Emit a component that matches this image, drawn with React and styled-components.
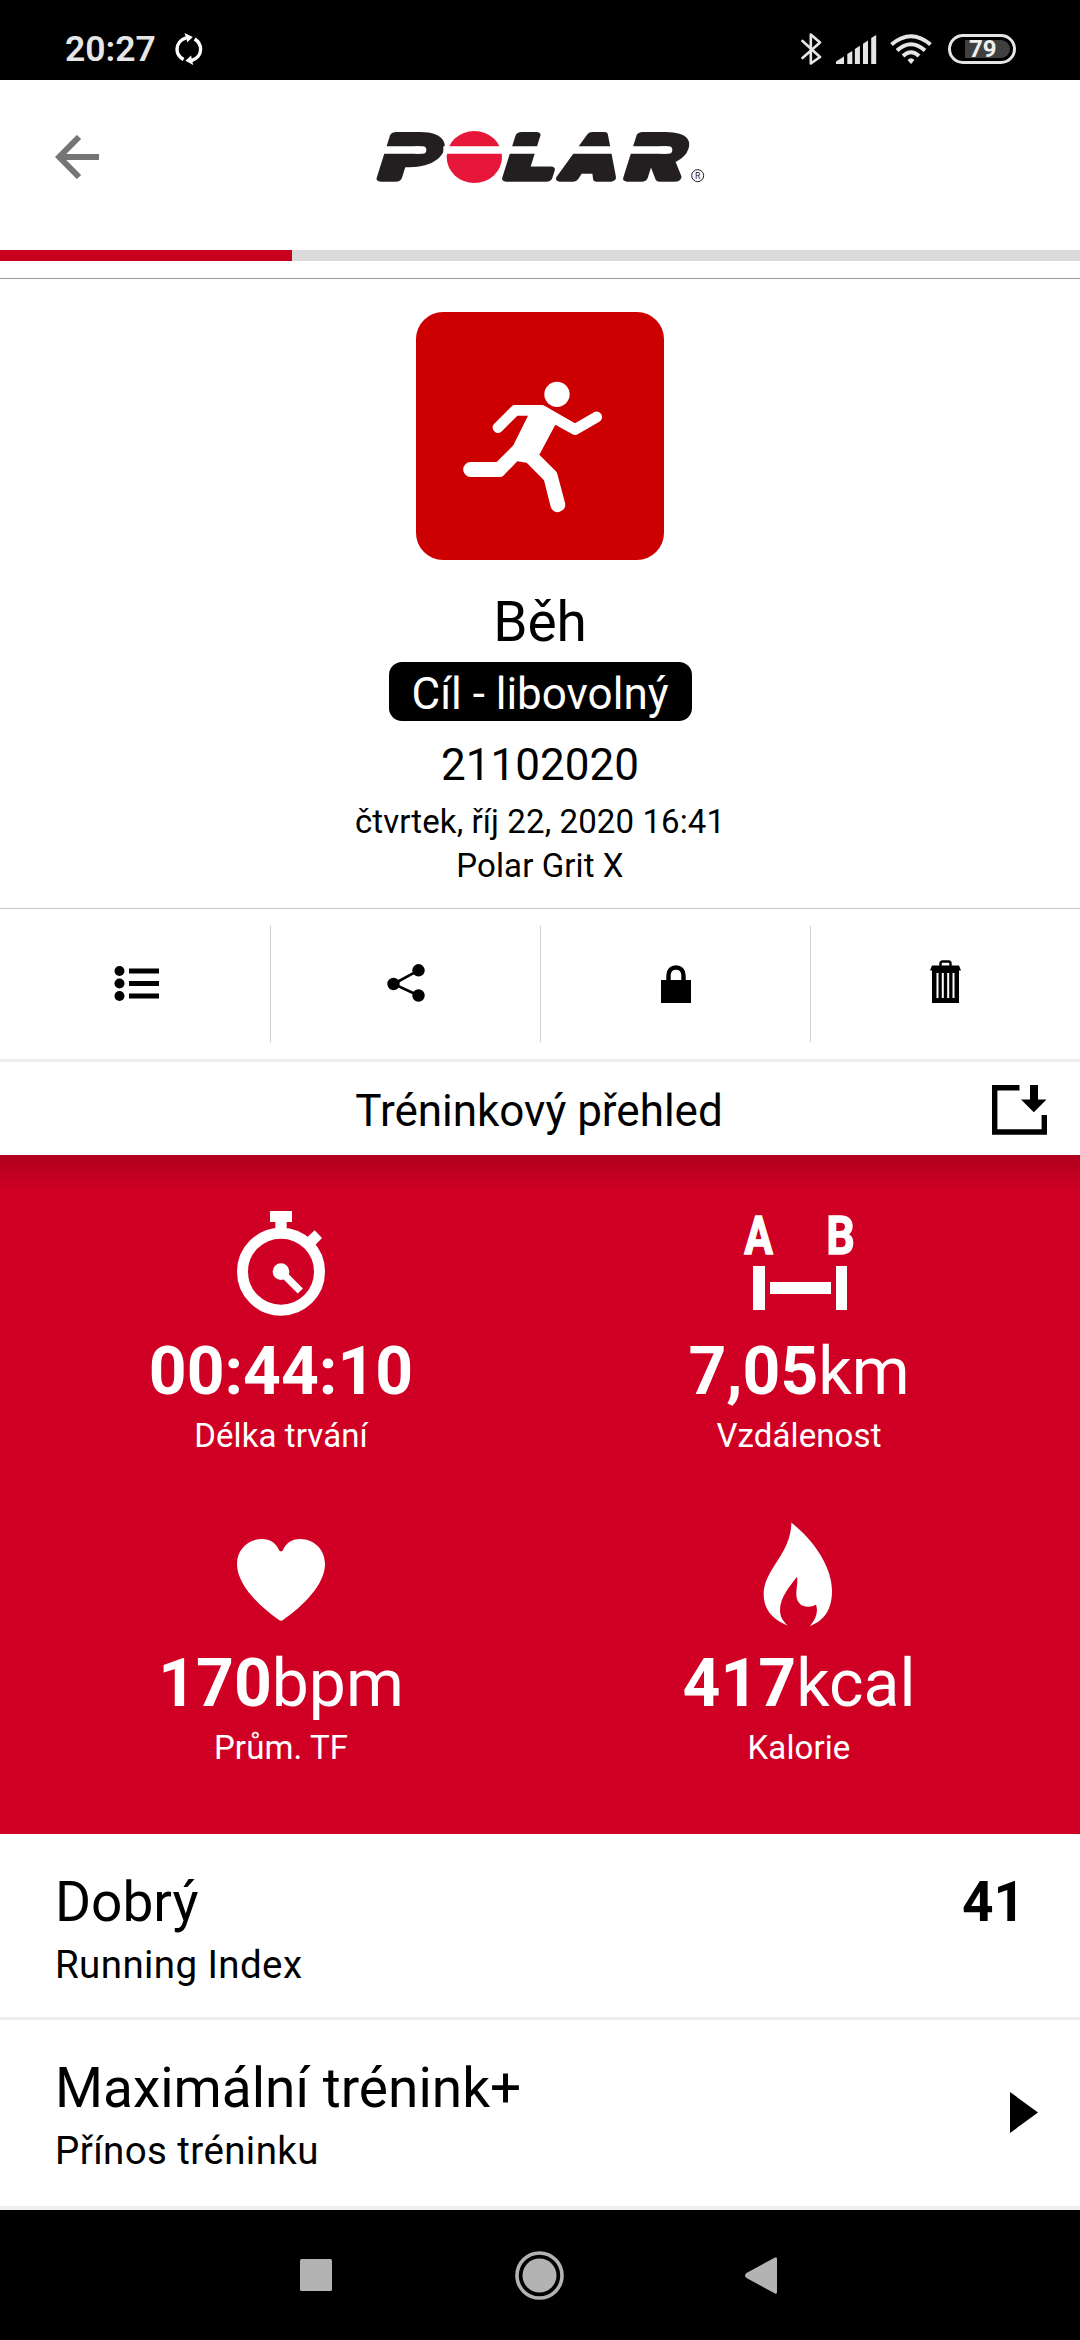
import React from "react";
import styled, { createGlobalStyle } from "styled-components";

const stats = [
  { icon: "duration", value: "00:44:10", unit: "", label: "Délka trvání" },
  { icon: "distance", value: "7,05", unit: "km", label: "Vzdálenost" },
  { icon: "heart", value: "170", unit: "bpm", label: "Prům. TF" },
  { icon: "flame", value: "417", unit: "kcal", label: "Kalorie" },
];

const GlobalStyle = createGlobalStyle`
  * {
    box-sizing: border-box;
  }

  body {
    margin: 0;
    background: #fff;
    color: #000;
    font-family: Roboto, sans-serif;
  }

  svg {
    display: block;
    flex-shrink: 0;
  }
`;

const SyncIcon = () => (
  <svg width="28" height="33" fill="none" stroke="#fff" strokeWidth="3.4" overflow="visible">
    <path d="M8.6 26.6C4 24 2 20 2 16.3C2 11 5.5 6.5 11 4.8M19.6 6C23.6 8.4 25.6 12.5 25.6 16.3C25.6 21.5 22 26 16.5 27.6" />
    <path d="M9.5 0L17.8 3.9L12.3 9.3ZM18.1 32L10.4 27.8L16.1 22.4Z" fill="#fff" stroke="none" />
  </svg>
);

const BluetoothIcon = () => (
  <svg width="22" height="34" fill="none" stroke="#e6e6e6" strokeWidth="2.6">
    <path d="M1.5 9L19 25L9.8 31.5V2.5L19 10.5L1.5 26" strokeLinejoin="round" strokeLinecap="round" />
  </svg>
);

const SignalIcon = () => (
  <svg width="41" height="29" fill="#e6e6e6">
    <path d="M0 29V26.5L8 21.5V29ZM11.3 29V19L16.3 16V29ZM18.9 29V14L23.9 10.7V29ZM27 29V8.7L32 5.4V29ZM35.2 29V3L40.2 0V29Z" />
  </svg>
);

const WifiIcon = () => (
  <svg width="42" height="30" fill="none" stroke="#e6e6e6" strokeWidth="4">
    <path d="M1.5 10.5Q21 -6 40.5 10.5M7 16.5Q21 4 35 16.5M13 22Q21 14.5 29 22" />
    <path d="M17.5 26Q21 22.5 24.5 26L21 30Z" fill="#e6e6e6" stroke="none" />
  </svg>
);

const PolarLogo = () => (
  <svg width="360" height="90" viewBox="0 0 1080 270">
    <g
      fill="#231f20"
      stroke="#231f20"
      strokeWidth="22"
      strokeLinejoin="round"
      fontFamily="Roboto, sans-serif"
      fontWeight="900"
      fontSize="179"
    >
      <text transform="translate(52 204) skewX(-17.5) scale(1.44 1)">P</text>
      <text transform="translate(428 204) skewX(-17.5) scale(1.42 1)">L</text>
      <text transform="translate(602 204) skewX(-15) scale(1.24 1)">A</text>
      <text transform="translate(791 204) skewX(-17.5) scale(1.4 1)">R</text>
    </g>
    {/* solid shoulders of the A above its crossbar */}
    <path d="M704 90H745L750 165H660Z" fill="#231f20" />
    <ellipse cx="343" cy="141" rx="83" ry="78" fill="#e61739" />
    <g stroke="#fff" strokeWidth="22">
      <path d="M60 120H180M250 120H620M620 120H775M795 120H920" />
      <path d="M170 120H188M905 120H926" strokeLinecap="round" />
    </g>
    <circle cx="1013" cy="197" r="18" fill="none" stroke="#231f20" strokeWidth="3" />
    <text x="1013" y="206" fontFamily="Roboto, sans-serif" fontSize="26" textAnchor="middle" fill="#231f20">
      R
    </text>
  </svg>
);

const RunnerIcon = () => (
  <svg width="248" height="248" viewBox="48 36 744 744" fill="#fff">
    <circle cx="471" cy="283" r="38" />
    <path d="M343 315H424Q431 315 436 319L525 370L582 337A16 16 0 0 1 598 365L533 403Q525 407 516 402L466 374L418 464L467 513Q471 517 472 522L495 608A22 22 0 0 1 452 620L432 541L380 488L352 484L310 527Q306 531 299 531H212A22 22 0 0 1 212 486H290L340 436L384 347H352L304 395A16 16 0 0 1 282 372L336 318Q339 315 343 315Z" />
  </svg>
);

const StatIcon = ({ name }) => {
  switch (name) {
    case "duration":
      return (
        <svg width="132" height="120" viewBox="255 30 396 360" fill="#fff">
          <circle cx="453" cy="245" r="115.5" fill="none" stroke="#fff" strokeWidth="33" />
          <path d="M420 63H486V96H470V120H436V96H420ZM554 121L576 144L553 168L530 143Z" />
          <circle cx="453" cy="245" r="25" />
          <path d="M453 245L511 303" stroke="#fff" strokeWidth="22" />
        </svg>
      );
    case "distance":
      return (
        <svg width="132" height="120" viewBox="249 30 396 360" fill="#fff">
          <g fontFamily="Roboto, sans-serif" fontWeight="700" fontSize="160" stroke="#fff" strokeWidth="4">
            <text transform="translate(283 193) scale(0.8 1)">A</text>
            <text transform="translate(529 193) scale(0.84 1)">B</text>
          </g>
          <path d="M309 228H345V360H309ZM558 228H591V360H558ZM360 276H543V312H360Z" />
        </svg>
      );
    case "heart":
      return (
        <svg width="132" height="120" viewBox="255 36 396 360" fill="#fff">
          <path d="M448 152C439 130 421 117 396 117C352 117 321 150 321 192C321 254 388 319 447 360Q453 364 459 360C518 319 585 254 585 192C585 150 554 117 510 117C485 117 467 130 458 152Q453 156 448 152Z" />
        </svg>
      );
    default:
      return (
        <svg width="132" height="120" viewBox="249 36 396 360" fill="#fff">
          <path d="M424 68C482 112 546 195 546 272C546 332 520 362 480 378C499 355 505 335 498 314C475 326 438 322 439 280C439 262 444 250 441 230C422 256 390 290 390 330C390 350 400 366 414 377C370 360 341 330 341 282C341 210 424 160 424 68Z" />
        </svg>
      );
  }
};

const ListIcon = () => (
  <svg width="44" height="37" overflow="visible">
    <circle cx="5.5" cy="6" r="5" />
    <circle cx="5.5" cy="18.5" r="5" />
    <circle cx="5.5" cy="31" r="5" />
    <path d="M15 3.5H45V8.5H15ZM15 16H45V21H15ZM15 28.5H45V33.5H15Z" />
  </svg>
);

const ShareIcon = () => (
  <svg width="38" height="38">
    <circle cx="31.5" cy="6.3" r="6.2" />
    <circle cx="6.5" cy="20" r="6.2" />
    <circle cx="31.5" cy="31.5" r="6.2" />
    <path d="M31.5 6.3L6.5 20L31.5 31.5" fill="none" stroke="#000" strokeWidth="2.6" />
  </svg>
);

const LockIcon = () => (
  <svg width="30" height="38">
    <path d="M0 15H30V38H0Z" />
    <path d="M7.5 17V10.5C7.5 5.5 10.5 2.5 15 2.5S22.5 5.5 22.5 10.5V17" fill="none" stroke="#000" strokeWidth="4.4" />
  </svg>
);

const TrashIcon = () => (
  <svg width="31" height="43">
    <path d="M10.5 6V3.5Q10.5 1.5 12.5 1.5H18.5Q20.5 1.5 20.5 3.5V6" fill="none" stroke="#000" strokeWidth="2.4" />
    <path d="M2 5.5H29L31 10.5H0Z" />
    <path fillRule="evenodd" d="M2 10H29V43H2ZM6.5 13V38H8.5V13ZM11.8 13V38H13.8V13ZM17.2 13V38H19.2V13ZM22.5 13V38H24.5V13Z" />
  </svg>
);

const ExportIcon = () => (
  <svg width="55" height="50">
    <path d="M27.5 2.7H2.7V47H52.3V30" fill="none" stroke="#000" strokeWidth="5.4" />
    <path d="M38 0H46V14.5H54.5L41.8 27.2L29 14.5H38Z" />
  </svg>
);

const StatusBar = styled.div`
  display: flex;
  align-items: center;
  justify-content: space-between;
  height: 80px;
  padding: 18px 64px 0 65px;
  background: #000;
`;

const StatusGroup = styled.div`
  display: flex;
  align-items: center;
  gap: ${(props) => props.$gap}px;
`;

const Clock = styled.span`
  color: #e6e6e6;
  font-size: 35.5px;
  font-weight: 600;
  line-height: 40px;
`;

const Battery = styled.div`
  width: 68px;
  height: 30px;
  margin-left: 3px;
  padding: 3px 3px 3px 14px;
  border: 3px solid #e6e6e6;
  border-radius: 15px;
`;

const BatteryLevel = styled.div`
  height: 18px;
  padding-left: 4px;
  border-radius: 0 9px 9px 0;
  background: #404040;
  color: #f0f0f0;
  font-size: 24px;
  font-weight: 700;
  line-height: 19px;
`;

const Header = styled.header`
  display: grid;
  grid-template-columns: 1fr auto 1fr;
  height: 170px;
  padding: 30px 55px 0;
`;

const BackButton = styled.button`
  justify-self: start;
  align-self: start;
  margin: 25px 0 0;
  padding: 0;
  border: 0;
  background: none;
`;

const ProgressTrack = styled.div`
  height: 11px;
  background: #dadada;
`;

const ProgressFill = styled.div`
  height: 100%;
  background: #c8001e;
`;

const Summary = styled.section`
  display: flex;
  flex-direction: column;
  align-items: center;
  height: 631px;
  margin-top: 17px;
  padding-top: 33px;
  border-top: 1px solid #9b9b9b;
  border-bottom: 1px solid #c8c8c8;
`;

const SportTile = styled.div`
  border-radius: 27px;
  background: #c00;
`;

const SportName = styled.h1`
  margin: 30px 0 7px;
  font-size: 55px;
  font-weight: 400;
  line-height: 65px;
`;

const Target = styled.div`
  width: 303px;
  height: 59px;
  border-radius: 13px;
  background: #000;
  color: #fff;
  font-size: 44px;
  line-height: 65px;
  text-align: center;
  white-space: nowrap;
`;

const SessionName = styled.div`
  margin: 18px 0 9px;
  font-size: 44px;
  line-height: 52px;
`;

const Detail = styled.div`
  font-size: 33px;
  letter-spacing: 0.1px;
  line-height: 44px;
`;

const Actions = styled.nav`
  display: grid;
  grid-template-columns: repeat(4, 1fr);
  height: 153px;
  padding: 17px 0;
  border-bottom: 3px solid #efefef;
`;

const Action = styled.button`
  display: flex;
  justify-content: center;
  padding: ${(props) => props.$top}px 0 0;
  border: 0;
  border-left: 1px solid #d0d0d0;
  background: none;

  &:first-child {
    border-left-color: transparent;
  }
`;

const Overview = styled.div`
  display: grid;
  grid-template-columns: 1fr auto 1fr;
  align-items: center;
  height: 93px;
  padding: 0 33px 0 31px;

  svg {
    justify-self: end;
    margin-top: 3px;
  }
`;

const OverviewTitle = styled.h2`
  grid-column: 2;
  margin: 4px 0 0;
  font-size: 44px;
  font-weight: 400;
  line-height: 52px;
`;

const Stats = styled.section`
  display: grid;
  grid-template-columns: repeat(2, 1fr);
  row-gap: 54px;
  align-content: start;
  height: 679px;
  padding: 45px 22px 0;
  background: linear-gradient(rgba(0, 0, 0, 0.16), transparent 36px) #d00024;
  color: #fff;
`;

const Stat = styled.div`
  display: flex;
  flex-direction: column;
  align-items: center;
`;

const StatValue = styled.div`
  margin: 13px 0 3px;
  font-size: 66px;
  line-height: 78px;
`;

const ResultRow = styled.div`
  display: flex;
  justify-content: space-between;
  height: ${(props) => props.$height}px;
  padding: 36px ${(props) => props.$right}px 0 55px;
  border-bottom: ${(props) => props.$border}px solid #efefef;
`;

const ResultTitle = styled.div`
  margin-bottom: 8px;
  font-size: 55px;
  font-weight: ${(props) => (props.$bold ? 700 : 400)};
  line-height: 64px;
`;

const ResultLabel = styled.div`
  font-size: 38.5px;
  letter-spacing: 0.4px;
  line-height: 46px;
`;

const ExpandArrow = styled.svg`
  margin-top: 36px;
`;

const NavBar = styled.footer`
  display: flex;
  align-items: center;
  height: 130px;
  padding-left: 300px;
  background: #000;
`;

const App = () => (
  <>
    <GlobalStyle />
    <StatusBar>
      <StatusGroup $gap={19}>
        <Clock>20:27</Clock>
        <SyncIcon />
      </StatusGroup>
      <StatusGroup $gap={13}>
        <BluetoothIcon />
        <SignalIcon />
        <WifiIcon />
        <Battery>
          <BatteryLevel>79</BatteryLevel>
        </Battery>
      </StatusGroup>
    </StatusBar>
    <Header>
      <BackButton aria-label="Zpět">
        <svg width="44" height="44" fill="none" stroke="#757575" strokeWidth="6">
          <path d="M44 22H4M24 2L4.2 22L24 42" />
        </svg>
      </BackButton>
      <PolarLogo />
    </Header>
    <ProgressTrack>
      <ProgressFill style={{ width: `${(292 / 1080) * 100}%` }} />
    </ProgressTrack>
    <Summary>
      <SportTile>
        <RunnerIcon />
      </SportTile>
      <SportName>Běh</SportName>
      <Target>Cíl - libovolný</Target>
      <SessionName>21102020</SessionName>
      <Detail>čtvrtek, říj 22, 2020 16:41</Detail>
      <Detail>Polar Grit X</Detail>
    </Summary>
    <Actions>
      <Action $top={39}>
        <ListIcon />
      </Action>
      <Action $top={38}>
        <ShareIcon />
      </Action>
      <Action $top={39}>
        <LockIcon />
      </Action>
      <Action $top={34}>
        <TrashIcon />
      </Action>
    </Actions>
    <Overview>
      <OverviewTitle>Tréninkový přehled</OverviewTitle>
      <ExportIcon />
    </Overview>
    <Stats>
      {stats.map(({ icon, value, unit, label }) => (
        <Stat key={icon}>
          <StatIcon name={icon} />
          <StatValue>
            <b>{value}</b>
            {unit}
          </StatValue>
          <Detail>{label}</Detail>
        </Stat>
      ))}
    </Stats>
    <ResultRow $height={186} $border={3} $right={55}>
      <div>
        <ResultTitle>Dobrý</ResultTitle>
        <ResultLabel>Running Index</ResultLabel>
      </div>
      <ResultTitle $bold>41</ResultTitle>
    </ResultRow>
    <ResultRow $height={190} $border={4} $right={42}>
      <div>
        <ResultTitle>Maximální trénink+</ResultTitle>
        <ResultLabel>Přínos tréninku</ResultLabel>
      </div>
      <ExpandArrow width="28" height="41">
        <path d="M0 0L28 20.5L0 41Z" />
      </ExpandArrow>
    </ResultRow>
    <NavBar>
      <svg width="480" height="50" fill="#b3b3b3">
        <rect x="0" y="9" width="32" height="32" rx="1.5" />
        <circle cx="239.5" cy="25.5" r="22.5" fill="none" stroke="#b3b3b3" strokeWidth="3.6" />
        <circle cx="239.5" cy="25.5" r="17" />
        <path d="M475 7.5Q477 6.5 477 9V42Q477 44.500 475 43.500L446.500 28Q443.500 25.500 446.500 23Z" />
      </svg>
    </NavBar>
  </>
);

export default App;
